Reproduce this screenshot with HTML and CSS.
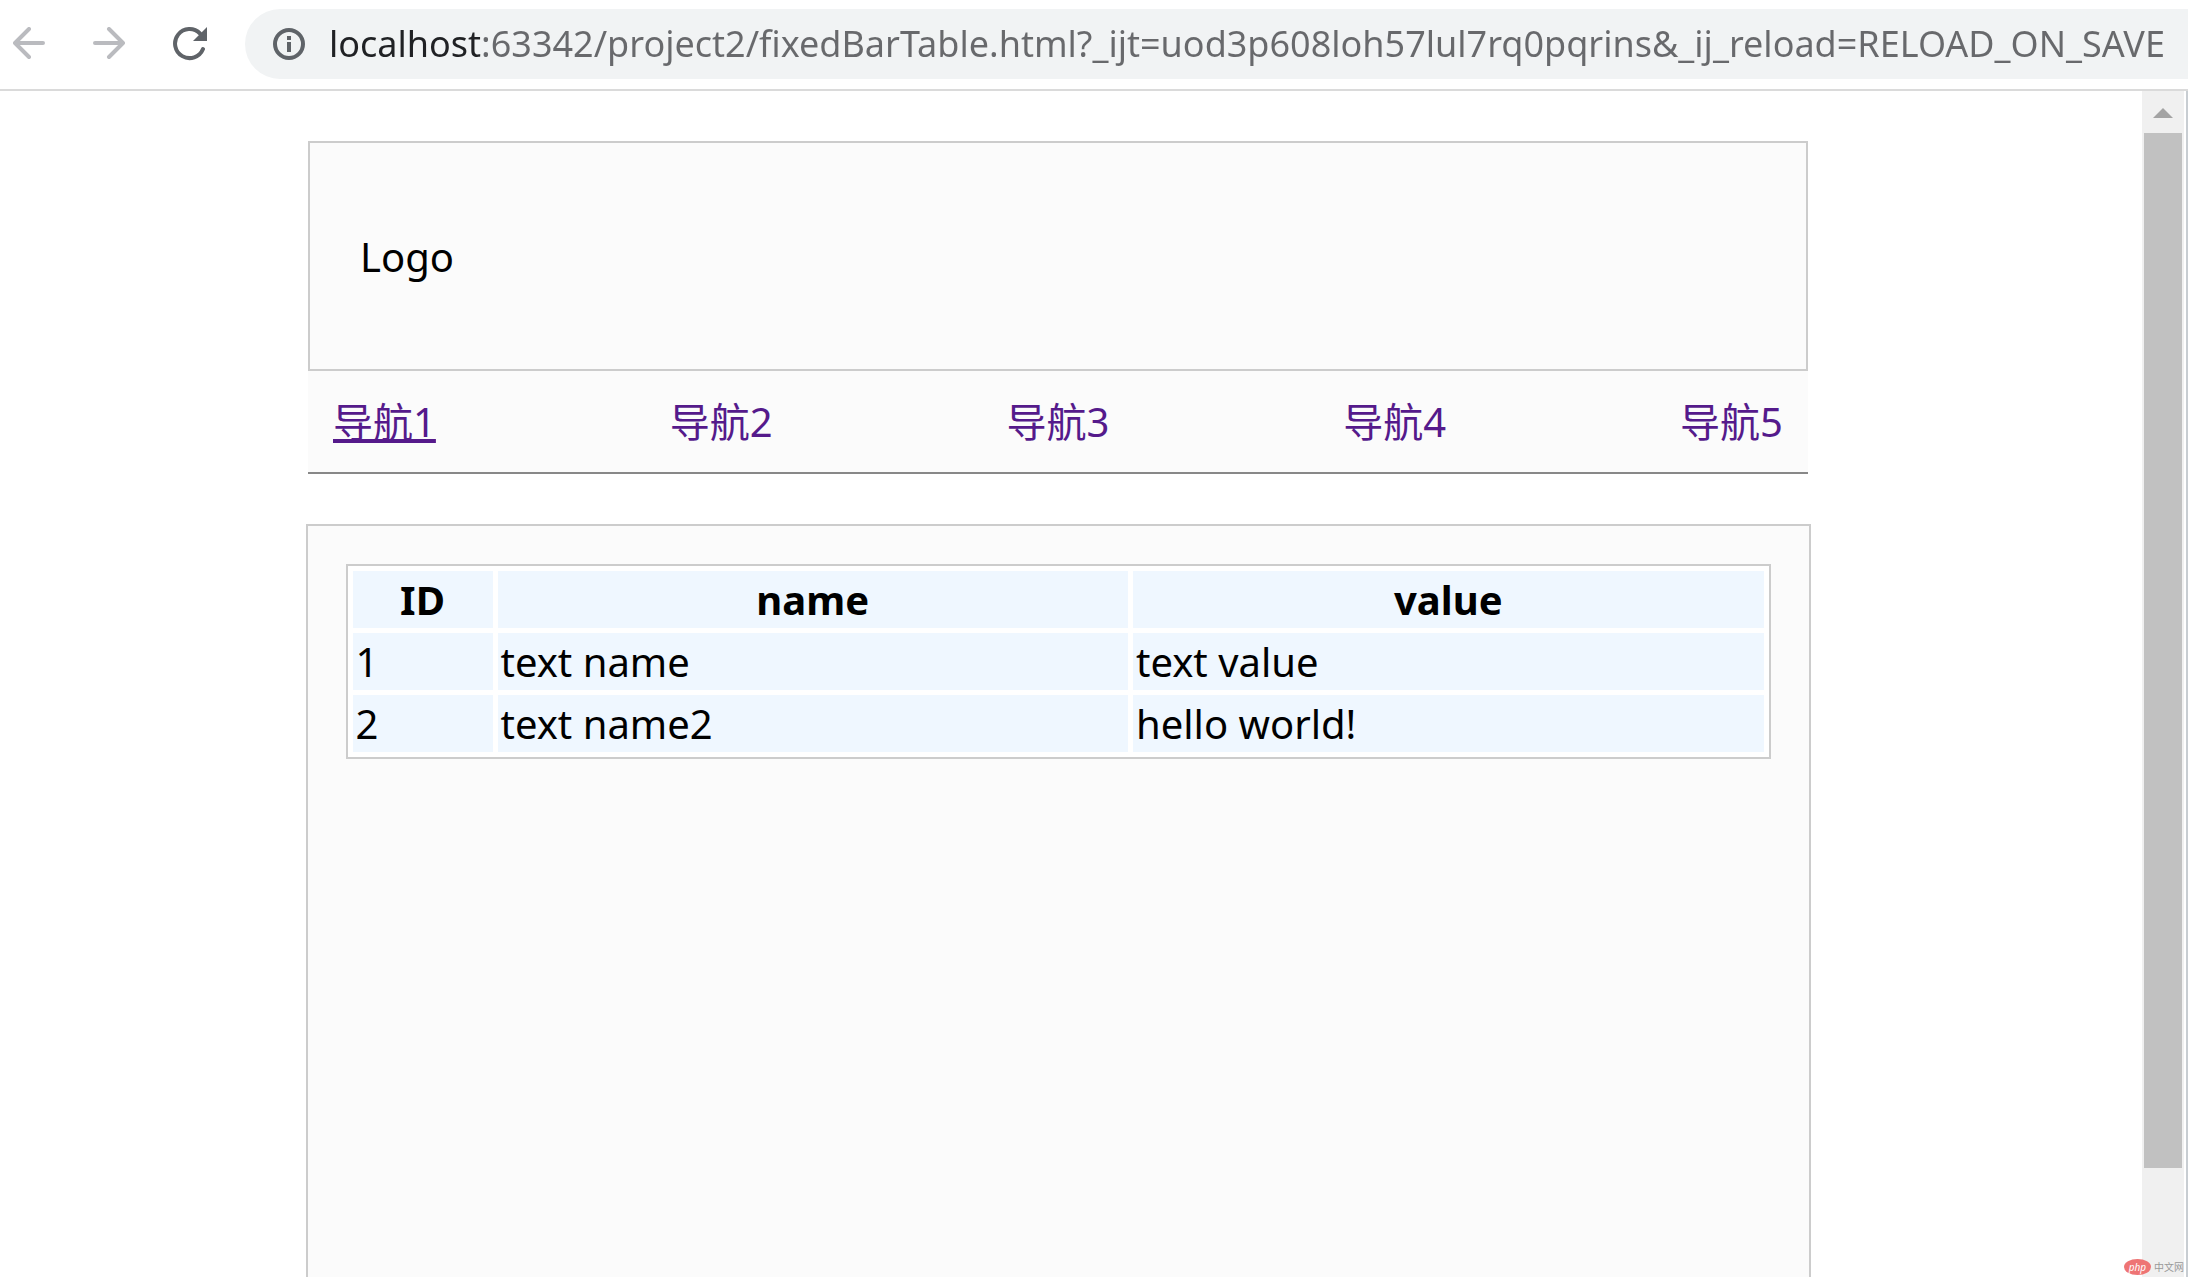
FILE: index.html
```html
<!DOCTYPE html>
<html lang="zh-CN">
<head>
<meta charset="utf-8">
<title>fixedBarTable</title>
<link rel="stylesheet" href="styles.css">
</head>
<body>
<div class="toolbar">
  <button class="tool back" type="button" aria-label="Back">
    <svg width="34" height="34" viewBox="0 0 34 34" fill="none" stroke="currentColor" stroke-width="4" stroke-linecap="round" stroke-linejoin="round"><path d="M30 16H3M16 2L2 16l14 14"/></svg>
  </button>
  <button class="tool forward" type="button" aria-label="Forward">
    <svg width="34" height="34" viewBox="0 0 34 34" fill="none" stroke="currentColor" stroke-width="4" stroke-linecap="round" stroke-linejoin="round"><path d="M2 16h27M16 2l14 14-14 14"/></svg>
  </button>
  <button class="tool reload" type="button" aria-label="Reload">
    <svg width="34" height="34" viewBox="0 0 34 34"><path d="M27 6.500A14.500 14.500 0 1 0 30 22" fill="none" stroke="currentColor" stroke-width="4" stroke-linecap="round"/><path d="M34 0v14H20z" fill="currentColor"/></svg>
  </button>
  <div class="address">
    <svg class="info" width="32" height="32" viewBox="0 0 32 32"><circle cx="16" cy="16" r="14" fill="none" stroke="currentColor" stroke-width="4"/><path d="M14 14h4v10h-4zM14 8h4v4h-4z" fill="currentColor"/></svg>
    <input class="url" type="text" aria-label="Address" spellcheck="false" value="localhost:63342/project2/fixedBarTable.html?_ijt=uod3p608loh57lul7rq0pqrins&amp;_ij_reload=RELOAD_ON_SAVE">
  </div>
</div>
<div class="view">
  <div class="page">
    <header class="banner">Logo</header>
    <nav class="nav">
      <a class="current" href="#1">导航1</a>
      <a href="#2">导航2</a>
      <a href="#3">导航3</a>
      <a href="#4">导航4</a>
      <a href="#5">导航5</a>
    </nav>
    <main class="content">
      <table class="data">
        <thead>
          <tr><th class="id">ID</th><th>name</th><th>value</th></tr>
        </thead>
        <tbody>
          <tr><td>1</td><td>text name</td><td>text value</td></tr>
          <tr><td>2</td><td>text name2</td><td>hello world!</td></tr>
        </tbody>
      </table>
    </main>
  </div>
  <div class="scrollbar">
    <svg class="up" width="20" height="10" viewBox="0 0 20 10"><path d="M10 0l10 10H0z" fill="#a3a3a3"/></svg>
    <div class="thumb"></div>
  </div>
</div>
<div class="watermark"><span class="php">php</span><span>中文网</span></div>
</body>
</html>
```
FILE: styles.css
```css
* {
  box-sizing: border-box;
}

body {
  margin: 0;
  height: 100vh;
  display: flex;
  flex-direction: column;
  overflow: hidden;
  background: #fff;
  color: #000;
  font-family: "Noto Sans", "Noto Sans CJK SC", sans-serif;
  font-size: 40px;
  line-height: 53px;
}

.toolbar {
  flex: none;
  display: flex;
  align-items: center;
  gap: 46px;
  height: 91px;
  padding: 0 0 2px 13px;
  border-bottom: 2px solid #dadada;
}

.tool {
  flex: none;
  display: flex;
  padding: 0;
  border: 0;
  background: none;
  color: #babbbf;
}

.reload {
  color: #5f6368;
}

.address {
  flex: 1;
  display: flex;
  align-items: center;
  gap: 24px;
  height: 70px;
  margin-left: -8px;
  padding-left: 28px;
  border-radius: 35px 0 0 35px;
  background: #f1f3f4;
  color: #5f6368;
}

.info {
  flex: none;
}

/* The host name is drawn darker than the rest of the address. */
.url {
  flex: 1;
  min-width: 0;
  padding: 0;
  border: 0;
  outline: 0;
  background: linear-gradient(to right, #202124 153px, #68696c 153px);
  background-clip: text;
  color: transparent;
  font-family: inherit;
  font-size: 36px;
  line-height: 48px;
}

.view {
  flex: 1;
  min-height: 0;
  display: flex;
}

.page {
  flex: 1;
  display: flex;
  flex-direction: column;
  align-items: center;
  padding: 50px 26px 0 0;
}

.banner {
  flex: none;
  display: flex;
  align-items: center;
  width: 100%;
  max-width: 1500px;
  height: 230px;
  padding: 0 50px;
  border: 2px solid #ccc;
  background: #fbfbfb;
}

.nav {
  flex: none;
  display: flex;
  justify-content: space-between;
  width: 100%;
  max-width: 1500px;
  margin-bottom: 50px;
  padding: 24px 25px;
  border-bottom: 2px solid #888;
  background: #fbfbfb;
}

.nav a {
  color: #551a8b;
  text-decoration: none;
}

.nav .current {
  text-decoration: underline;
  text-decoration-thickness: 4px;
  text-decoration-skip-ink: none;
}

.content {
  flex: 1;
  width: 100%;
  max-width: 1505px;
  padding: 38px;
  border: 2px solid #ccc;
  border-bottom: 0;
  background: #fbfbfb;
}

.data {
  width: 100%;
  table-layout: fixed;
  border: 2px solid #ccc;
  border-spacing: 5px;
  background: #fff;
}

.data th,
.data td {
  padding: 2px 3px;
  background: #eff7ff;
}

.data td {
  text-align: left;
}

.data .id {
  width: 140px;
}

.scrollbar {
  flex: none;
  width: 46px;
  padding: 17px 4px 0 2px;
  border-right: 2px solid #c8cdd2;
  background: #f0f0f0;
  box-shadow: inset -2px 0 #fff;
}

.up {
  display: block;
  margin: 0 auto;
}

.thumb {
  height: calc(100% - 134px);
  margin-top: 15px;
  background: #c1c1c1;
}

.watermark {
  position: absolute;
  right: 4px;
  bottom: 2px;
  display: flex;
  align-items: center;
  gap: 3px;
  color: #999;
  font-size: 10px;
  line-height: 16px;
}

.php {
  padding: 0 5px;
  border-radius: 50%;
  background: #ee7474;
  color: #fff;
  font-style: italic;
}
```
